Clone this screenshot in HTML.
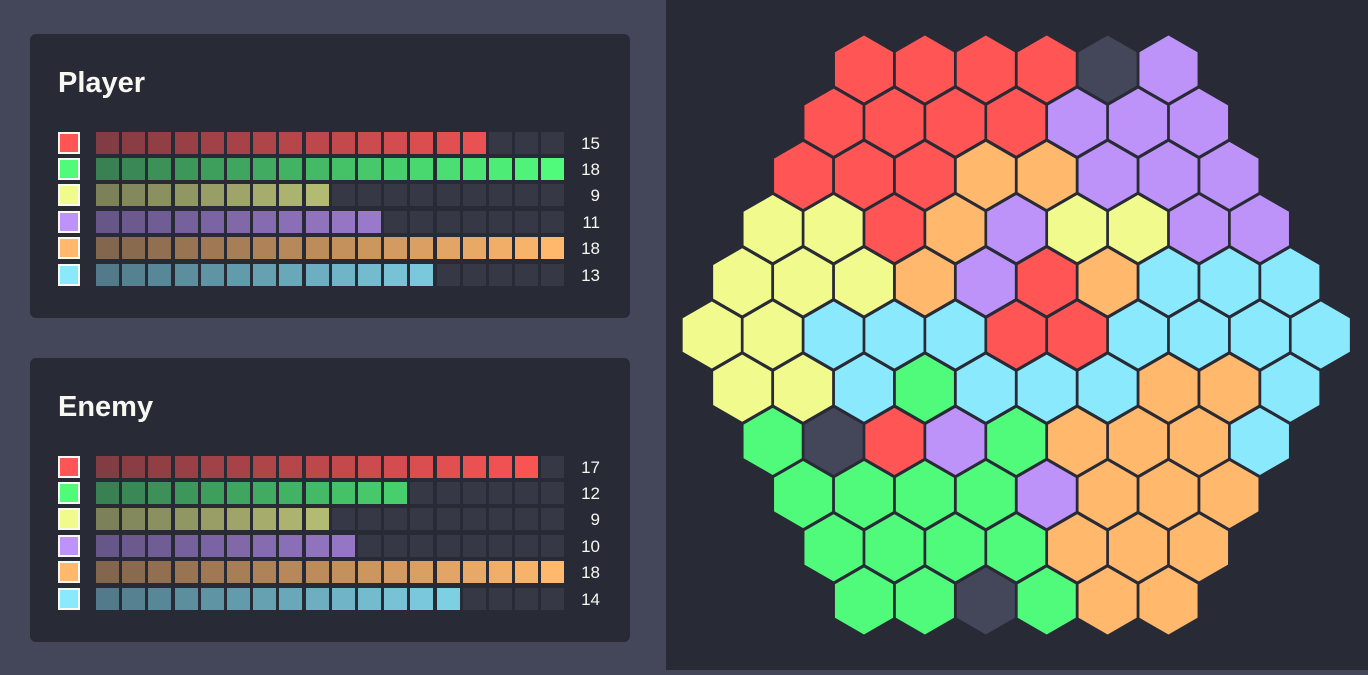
<!DOCTYPE html>
<html><head><meta charset="utf-8"><style>
html,body{margin:0;width:1368px;height:670px;}
body{background:#44475a;position:relative;overflow:hidden;font-family:"Liberation Sans",sans-serif;}
.card{position:absolute;left:30px;width:600px;height:284px;background:#282a36;border-radius:6px;}
.title{position:absolute;left:28px;top:33px;font-size:29px;font-weight:bold;color:#f8f8f2;}
.sw{position:absolute;left:28px;width:18px;height:18px;border:2px solid #f8f8f2;}
.cell{position:absolute;width:23px;height:22px;}
.num{position:absolute;left:530px;width:40px;text-align:right;font-size:17px;color:#f8f8f2;line-height:22px;}
#right{position:absolute;left:666px;top:0;width:702px;height:670px;background:#282a36;}
</style></head><body>
<div class="card" id="c1" style="top:34px"><div class="title">Player</div>
<div class="num" style="top:99px">15</div><div class="num" style="top:125px">18</div><div class="num" style="top:151px">9</div><div class="num" style="top:178px">11</div><div class="num" style="top:204px">18</div><div class="num" style="top:231px">13</div></div>
<div class="card" id="c2" style="top:358px"><div class="title">Enemy</div>
<div class="num" style="top:99px">17</div><div class="num" style="top:125px">12</div><div class="num" style="top:151px">9</div><div class="num" style="top:178px">10</div><div class="num" style="top:204px">18</div><div class="num" style="top:231px">14</div></div>
<div id="right"><svg id="hx" width="702" height="670"></svg></div>
<script>
var C={R:[255,85,85],G:[80,250,123],Y:[241,250,140],P:[189,147,249],O:[255,184,108],C:[139,233,253],D:[68,71,90]};
var order=['R','G','Y','P','O','C'];var tops=[98,124,150,177,203,230];
function hex(c){return 'rgb('+c.join(',')+')';}
function fill(id,vals){var card=document.getElementById(id);var h='';
for(var r=0;r<6;r++){var col=C[order[r]];
h+='<div class="sw" style="top:'+tops[r]+'px;background:'+hex(col)+'"></div>';
for(var i=0;i<18;i++){var bg;if(i<vals[r]){var a=0.42+0.58*i/17;bg=hex([0,1,2].map(function(k){return Math.round(([40,42,54][k])*(1-a)+col[k]*a);}));}else bg='#363846';
h+='<div class="cell" style="left:'+(66+i*26.2).toFixed(1)+'px;top:'+tops[r]+'px;background:'+bg+'"></div>';}}
card.insertAdjacentHTML('beforeend',h);}
fill('c1',[15,18,9,11,18,13]);fill('c2',[17,12,9,10,18,14]);
var rows=["RRRRDP","RRRRPPP","RRROOPPP","YYROPYYPP","YYYOPROCCC","YYCCCRRCCCC","YYCGCCCOOC","GDRPGOOOC","GGGGPOOO","GGGGOOO","GGDGOO"];
var s='';var R=35,w=60.9;
rows.forEach(function(row,ri){var n=row.length;var y=69+ri*53.2;
var x0=(864-666)-(n-6)*w/2;
for(var i=0;i<n;i++){var cx=x0+i*w;var p=[];for(var k=0;k<6;k++){var ang=Math.PI/180*(60*k-90);p.push((cx+R*Math.cos(ang)).toFixed(1)+','+(y+R*Math.sin(ang)).toFixed(1));}
s+='<polygon points="'+p.join(' ')+'" fill="'+hex(C[row[i]])+'" stroke="#282a36" stroke-width="2.5"/>';}});
document.getElementById('hx').innerHTML=s;
</script>
</body></html>
